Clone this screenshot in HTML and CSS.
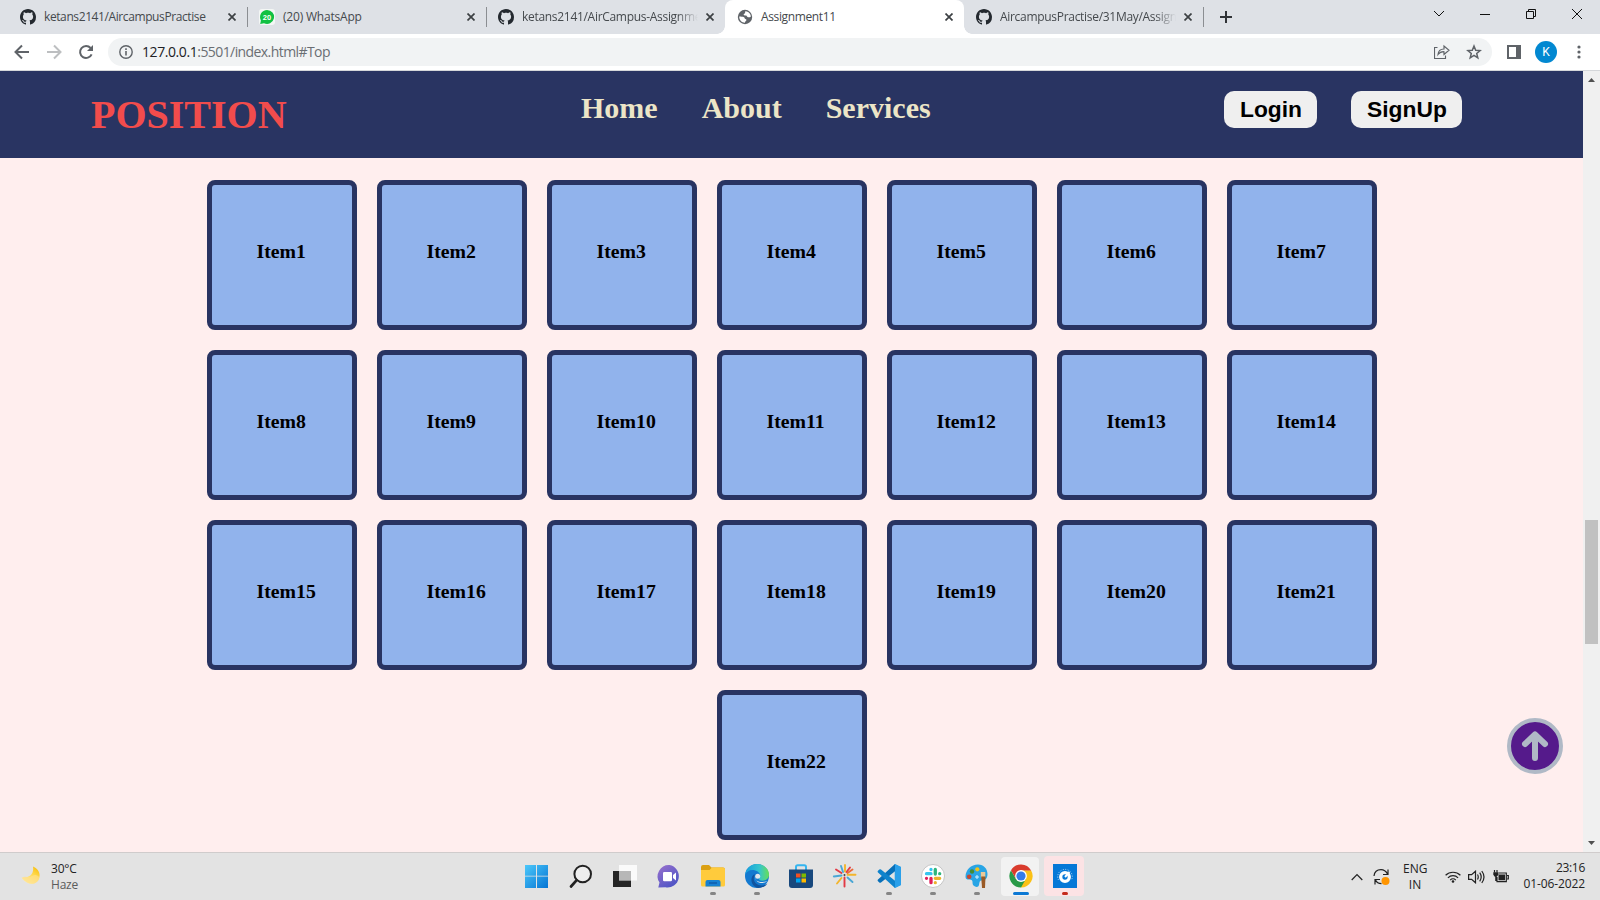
FILE: index.html
```html
<!DOCTYPE html>
<html lang="en">
<head>
<meta charset="utf-8">
<title>Assignment11</title>
<link rel="stylesheet" href="styles.css">
</head>
<body>
<svg class="defs" width="0" height="0">
  <symbol id="github" viewBox="0 0 16 16"><path fill="#24292f" d="M8 0C3.58 0 0 3.58 0 8c0 3.54 2.29 6.53 5.47 7.59.4.07.55-.17.55-.38 0-.19-.01-.82-.01-1.49-2.01.37-2.53-.49-2.69-.94-.09-.23-.48-.94-.82-1.13-.28-.15-.68-.52-.01-.53.63-.01 1.08.58 1.23.82.72 1.21 1.87.87 2.33.66.07-.52.28-.87.51-1.07-1.78-.2-3.64-.89-3.64-3.95 0-.87.31-1.59.82-2.15-.08-.2-.36-1.02.08-2.12 0 0 .67-.21 2.2.82.64-.18 1.32-.27 2-.27s1.36.09 2 .27c1.53-1.04 2.2-.82 2.2-.82.44 1.1.16 1.92.08 2.12.51.56.82 1.27.82 2.15 0 3.07-1.87 3.75-3.65 3.95.29.25.54.73.54 1.48 0 1.07-.01 1.93-.01 2.2 0 .21.15.46.55.38A8.01 8.01 0 0 0 16 8c0-4.42-3.58-8-8-8z"/></symbol>
  <symbol id="close" viewBox="0 0 8 8"><path d="M.5.5l7 7M7.5.5l-7 7" stroke="#3c4043" stroke-width="1.7"/></symbol>
</svg>

<div class="tabstrip">
  <div class="tab">
    <svg class="fav"><use href="#github"/></svg>
    <span class="title t1">ketans2141/AircampusPractise</span>
    <svg class="close"><use href="#close"/></svg>
  </div>
  <div class="tab sep">
    <svg class="fav" viewBox="0 0 16 16"><rect width="16" height="16" rx="3" fill="#f4f7f5"/><path d="M8 1a7 7 0 1 1-3 13.3L1.2 15l.7-3.600A7 7 0 0 1 8 1z" fill="#12c143"/><text x="8" y="10.700" class="badge">20</text></svg>
    <span class="title t2">(20) WhatsApp</span>
    <svg class="close"><use href="#close"/></svg>
  </div>
  <div class="tab sep">
    <svg class="fav"><use href="#github"/></svg>
    <span class="title fade t3">ketans2141/AirCampus-Assignme</span>
    <svg class="close"><use href="#close"/></svg>
  </div>
  <div class="tab active">
    <svg class="fav" viewBox="0 0 16 16"><circle cx="8" cy="8" r="7.200" fill="#5f6368"/><path d="M8.300 2.200c2.300 0 4.500 1.500 5.300 3.800l.2 1.700c-1 .6-2.200.8-3.300.3-.7-.4-.5-1.300-1.400-1.500-1-.1-1.800.1-2.300-.6-.4-.8.2-1.300.9-1.500.7-.3.2-1.100.6-2.200zM2.200 7.600c1.600.2 3.500-.1 4.900.7.700.6.400 1.500 1.300 1.700.8.200 1.200.5 1 1.300-.3.800-1.300.8-1.500 2.500-3.100 0-5.700-2.700-5.700-6.200z" fill="#fff"/></svg>
    <span class="title t4">Assignment11</span>
    <svg class="close"><use href="#close"/></svg>
  </div>
  <div class="tab">
    <svg class="fav"><use href="#github"/></svg>
    <span class="title fade t5">AircampusPractise/31May/Assign</span>
    <svg class="close"><use href="#close"/></svg>
  </div>
  <div class="newtab"><svg width="12" height="12"><path d="M6 0v12M0 6h12" stroke="#303337" stroke-width="2"/></svg></div>
  <div class="winctl">
    <svg viewBox="0 0 12 12"><path d="M1 3l5 5 5-5" /></svg>
    <svg viewBox="0 0 12 12"><path d="M1 6.500h10" /></svg>
    <svg viewBox="0 0 12 12"><path d="M1.500 3.500h7v7h-7zM3.500 3.500v-2h7v7h-2" /></svg>
    <svg viewBox="0 0 12 12"><path d="M1 1l10 10M11 1L1 11" /></svg>
  </div>
</div>

<div class="toolbar">
  <svg class="nav" viewBox="0 0 16 16"><path d="M15 8H2M8 1.500L1.500 8 8 14.500" stroke="#5f6368"/></svg>
  <svg class="nav" viewBox="0 0 16 16"><path d="M1 8h13M8 1.500L14.500 8 8 14.500" stroke="#bdbfc1"/></svg>
  <svg class="nav" viewBox="0 0 16 16"><path d="M13.600 10.300A6 6 0 1 1 12.600 4" stroke="#5f6368"/><path d="M15 1v6H9z" fill="#5f6368"/></svg>
  <div class="omnibox">
    <svg class="info" viewBox="0 0 14 14"><circle cx="7" cy="7" r="6.200" fill="none" stroke="#5f6368" stroke-width="1.400"/><path d="M7 6v4.500M7 3.300v1.600" stroke="#5f6368" stroke-width="1.600"/></svg>
    <span class="url"><b>127.0.0.1</b>:5501/index.html#Top</span>
    <svg class="share" viewBox="0 0 16 16"><path d="M3.500 3.500h-3v11h11v-3M4 10.500C4.300 7 6.500 5 10 5V2l5 4.300-5 4.200V7.700C7.300 7.600 5.500 8.500 4 10.500z" fill="none" stroke="#5f6368" stroke-width="1.150"/></svg>
    <svg class="star" viewBox="0 0 16 16"><path d="M8 2l1.700 4.200 4.400.3-3.400 2.900 1.100 4.400L8 11.400l-3.800 2.400 1.100-4.400L1.900 6.500l4.400-.3z" fill="none" stroke="#5f6368" stroke-width="1.500"/></svg>
  </div>
  <svg class="panel" viewBox="0 0 14 14"><path d="M1 1h12v12H1z" fill="none" stroke="#5f6368" stroke-width="2"/><path d="M9 1h4v12H9z" fill="#5f6368"/></svg>
  <span class="avatar">K</span>
  <svg class="dots" viewBox="0 0 4 14"><g fill="#5f6368"><circle cx="2" cy="2" r="1.600"/><circle cx="2" cy="7" r="1.600"/><circle cx="2" cy="12" r="1.600"/></g></svg>
</div>

<div class="viewport">
  <div class="page">
    <header class="header">
      <h1 class="logo">POSITION</h1>
      <nav class="links"><a>Home</a><a>About</a><a>Services</a></nav>
      <div class="buttons"><button>Login</button><button>SignUp</button></div>
    </header>
    <main class="items">
      <div class="item">Item1</div><div class="item">Item2</div><div class="item">Item3</div><div class="item">Item4</div><div class="item">Item5</div><div class="item">Item6</div><div class="item">Item7</div>
      <div class="item">Item8</div><div class="item">Item9</div><div class="item">Item10</div><div class="item">Item11</div><div class="item">Item12</div><div class="item">Item13</div><div class="item">Item14</div>
      <div class="item">Item15</div><div class="item">Item16</div><div class="item">Item17</div><div class="item">Item18</div><div class="item">Item19</div><div class="item">Item20</div><div class="item">Item21</div>
      <div class="item">Item22</div>
    </main>
    <svg class="totop" viewBox="0 0 56 56"><circle cx="28" cy="28" r="26" fill="#551a8b" stroke="#b0b9c6" stroke-width="4"/><path d="M28 40V18M18 26l10-9.500L38 26" fill="none" stroke="#b0b9c6" stroke-width="6" stroke-linecap="round" stroke-linejoin="round"/></svg>
  </div>
  <div class="scrollbar">
    <svg width="7" height="4"><path d="M0 4L3.500 0 7 4z" fill="#505050"/></svg>
    <i class="thumb"></i>
    <svg width="7" height="4"><path d="M0 0h7L3.500 4z" fill="#505050"/></svg>
  </div>
</div>

<footer class="taskbar">
  <div class="weather">
    <svg width="20" height="20" viewBox="0 0 20 20"><defs><linearGradient id="mn" x1="1" y1="0" x2=".3" y2="1"><stop offset="0" stop-color="#f5b800"/><stop offset=".45" stop-color="#ffd84a"/><stop offset="1" stop-color="#fff0b5"/></linearGradient></defs><path d="M12 .5c5 1.800 8 7 6 12-2 6-11 8.500-17.500-1C7 12.500 13.500 9 12 .5z" fill="url(#mn)"/><path d="M1 12c4-3 7 1 10-2 3-2 6-1 7.500 1.500-1.500 7-10 9.500-17.500.5z" fill="#ffe08a" opacity=".7"/></svg>
    <div class="two left"><span class="deg">30°C</span><span class="haze">Haze</span></div>
  </div>
  <div class="apps">
    <div class="app win"><svg viewBox="0 0 24 24"><defs><linearGradient id="wn" x1="0" y1="0" x2="1" y2="1"><stop offset="0" stop-color="#4cc8fa"/><stop offset="1" stop-color="#0474d4"/></linearGradient></defs><path d="M0 1h11v10.700H0zM12 1h11v10.700H12zM0 12.500h11V24H0zM12 12.500h11V24H12z" fill="url(#wn)"/></svg></div>
    <div class="app"><svg viewBox="0 0 24 24"><circle cx="13.700" cy="10" r="8.300" fill="#eee" stroke="#222" stroke-width="2"/><path d="M7.700 16.200L2 22.500" stroke="#222" stroke-width="2.700" stroke-linecap="round"/></svg></div>
    <div class="app"><svg viewBox="0 0 24 24"><path d="M0 7h18v16H0z" fill="#252525"/><path d="M6 1h18v15.500H6z" fill="#fff" opacity=".82"/><path d="M6 7h12v9.500H6z" fill="#aaa" opacity=".7"/></svg></div>
    <div class="app"><svg viewBox="-1 0 24 24"><defs><linearGradient id="ch" x1="0" y1="0" x2=".7" y2="1"><stop offset="0" stop-color="#9a71cd"/><stop offset="1" stop-color="#4d54c5"/></linearGradient></defs><path d="M11.500 1a11.300 11.300 0 1 1-4 22.300L.3 23.500l1.200-5A11.300 11.300 0 0 1 11.500 1z" fill="url(#ch)"/><rect x="5" y="8" width="9" height="9.300" rx="1.200" fill="#fff"/><path d="M15 11l3-2.500v8L15 14z" fill="#fff"/></svg></div>
    <div class="app run"><svg viewBox="0 0 24 24"><path d="M0 3q0-2 2-2h6l2.500 2.500H22q2 0 2 2V10H0z" fill="#dba013"/><path d="M0 6h8.500L11 3.500h11q2 0 2 2V21q0 1.500-1.500 1.500h-21Q0 22.500 0 21z" fill="#ffcb3c"/><path d="M4.500 22.500V18q0-2 2-2h11q2 0 2 2v4.500z" fill="#1681d2"/><path d="M8 19h8" stroke="#0f5cab" stroke-width="1.500"/></svg></div>
    <div class="app run"><svg viewBox="0 0 24 24"><defs><linearGradient id="ed" x1="0" x2="1"><stop offset="0" stop-color="#159dde"/><stop offset=".6" stop-color="#35c5cd"/><stop offset="1" stop-color="#68df55"/></linearGradient></defs><circle cx="12" cy="12" r="12" fill="#1379d0"/><path d="M0 11C1 4 6 0 12 0c7 0 12 5 12 10.500 0 4-3 6.200-6.500 6.200-3 0-4.200-1.200-3-2.700C17 9.500 12 6 7.500 6 4 6 1 8 0 11z" fill="url(#ed)"/><path d="M9.500 12c-2.500 5 2 9.500 7 9.500 2.500 0 4.500-1 6-2-1 2-5 4.500-9 4.500C7 23.500 3.500 14 9.500 10z" fill="#10539e"/><path d="M10.500 10.500c-2.500 5 3 9.500 11.800 6.800-3.500 2.500-8.300 2.200-10.500-.3-1.700-2-2.300-4.500-1.300-6.500z" fill="#e1e6ea"/><circle cx="12.700" cy="12.300" r="2.500" fill="#e1e6ea"/></svg></div>
    <div class="app"><svg viewBox="0 0 24 24"><path d="M7 6V3q0-1.700 1.700-1.700h6.600Q17 1.300 17 3v3" fill="none" stroke="#36b5ef" stroke-width="2"/><path d="M0 5.500h24V21q0 3-3 3H3q-3 0-3-3z" fill="#18487d"/><path d="M7 9.500h4.500v4H7z" fill="#f25022"/><path d="M12.500 9.500H17v4h-4.500z" fill="#7fba00"/><path d="M7 14.500h4.500v4H7z" fill="#00a4ef"/><path d="M12.500 14.500H17v4h-4.500z" fill="#ffb900"/></svg></div>
    <div class="app"><svg viewBox="0 0 24 24"><g stroke-width="1.900" stroke-linecap="round"><path d="M11.500 13.500v9M13.500 8L17 3.500M8.500 9L3 5.500" stroke="#e23a45"/><path d="M10 8L8 2M8.500 11.500L.8 12.500M14.500 13.500l5 4.500" stroke="#4ba7d5"/><path d="M12 7.500V1M14.500 10.800h8M8.500 14L4 19.500" stroke="#f3b52d"/><path d="M14.500 9l5-3.500" stroke="#ef6a38"/></g><circle cx="11.500" cy="11" r="1" fill="#444"/></svg></div>
    <div class="app run"><svg viewBox="0 0 24 24"><path d="M17.700 0L24 3v18l-6.300 3V0z" fill="#30a7ee"/><path d="M18 0L1 15.500q-1 .8 0 1.700l1.300 1.200q.8.600 1.700 0L18 7.300z" fill="#0870b9"/><path d="M18 24L1 8.500q-1-.8 0-1.700l1.300-1.200q.8-.6 1.700 0L18 16.700z" fill="#0f83cc"/><path d="M18 0l6 3v18l-6 3z" fill="#2aa0ea"/></svg></div>
    <div class="app run"><svg viewBox="0 0 24 24"><circle cx="12" cy="12" r="11.500" fill="#fff" stroke="#b9b9b9" stroke-width=".8"/><g stroke-width="3.300" stroke-linecap="round"><path d="M10 5.500v.01M5.500 9.700H10" stroke="#36c5f0"/><path d="M14.300 5.500V10M18.700 9.700v.01" stroke="#2eb67d"/><path d="M14.300 14.300h4.400M14.300 18.700v.01" stroke="#ecb22e"/><path d="M10 14.300v4.400M5.500 14.300v.01" stroke="#e01e5a"/></g></svg></div>
    <div class="app run"><svg viewBox="0 0 24 24"><path d="M13 .5c6 0 9.500 4.500 9.500 9.500 0 6-4 6.500-6 6.500s-2 2-2.500 4.500c-.5 2.500-3.500 2.500-5.500.5-1.700-2-.2-4.500-2-5.500S.5 17 .5 12.500C.5 6 6 .5 13 .5z" fill="#29a5e5"/><circle cx="4.200" cy="12.700" r="2.300" fill="#c6462f"/><circle cx="7" cy="7.500" r="2.200" fill="#438b35"/><circle cx="12.300" cy="5.300" r="2.100" fill="#f2c318"/><path d="M12 11v4M10 13h4" stroke="#d7f2ff"/><path d="M15.800 8h4.500v5.500h-4.500z" fill="#e9c99a"/><path d="M16.200 12.500h4.300L20 24h-3z" fill="#9a5a26"/></svg></div>
    <div class="app run current"><svg viewBox="0 0 24 24"><path d="M22 6.200A11.500 11.500 0 0 1 12 23.500L12 12V6.200z" fill="#fbc116"/><path d="M2 6.200A11.500 11.500 0 0 0 12 23.500l5-8.700L12 12 7 14.900z" fill="#299a48"/><path d="M2 6.200l5 8.700L12 6.500h10.100A11.500 11.500 0 0 0 2 6.200z" fill="#d93b2d"/><circle cx="12" cy="12" r="5.900" fill="#fff"/><circle cx="12" cy="12" r="4.600" fill="#347be8"/></svg></div>
    <div class="app run alert"><svg viewBox="0 0 24 24"><path d="M0 0h24v24H0z" fill="#0678d7"/><circle cx="12" cy="13" r="4.300" fill="none" stroke="#fff" stroke-width="3.300"/><path d="M12 13l4.500-5" stroke="#fff" stroke-width="2"/><path d="M5.500 16a7.300 7.300 0 1 1 13 0" fill="none" stroke="#fff" stroke-width="1" stroke-dasharray="1 1.500" opacity=".7"/></svg></div>
  </div>
  <div class="tray">
    <svg class="up" viewBox="0 0 12 8"><path d="M.7 7L6 1.500 11.300 7" /></svg>
    <svg class="sync" viewBox="0 0 17 18"><path d="M1 8C1.500 3.500 4 1.700 8 1.700c3 0 5 1.500 6.500 4.300M15 1.500v5h-5M7 11.500H2v5M2.500 12c1 2.200 3 3.500 6 3.700" /><circle cx="12.500" cy="13" r="4" class="orange"/></svg>
    <div class="two lang"><span class="eng">ENG</span><span class="in">IN</span></div>
    <svg class="wifi" viewBox="0 0 16 12"><path d="M.6 4.300a10.500 10.500 0 0 1 14.800 0M2.900 6.800a7.200 7.200 0 0 1 10.200 0M5.200 9.100a4 4 0 0 1 5.600 0"/><circle cx="8" cy="10.500" r="1.300" class="dark"/></svg>
    <svg class="vol" viewBox="0 0 17 14"><path d="M.6 4.700h3L7.500 1.200v11.600L3.600 9.300h-3zM9.500 4.500q1.500 2.500 0 5M11.700 2.700q3 4.300 0 8.600M13.800 1q4.400 6 0 12"/></svg>
    <svg class="bat" viewBox="0 0 16 13"><path d="M5.500 3h7.800v8.700H4V7M14 5.500h1.300v3.500H14M1.500 0v2.500M4 0v2.500M2.800 6v5"/><path d="M5.500 4.500H12v5.700H5.500zM.3 2.200h5v2.500l-1.500 2h-2l-1.500-2z" class="dark"/></svg>
    <div class="two clock"><span class="time">23:16</span><span class="date">01-06-2022</span></div>
  </div>
</footer>
</body>
</html>
```

FILE: styles.css
```css
* { box-sizing: border-box; }
body { margin: 0; width: 1600px; height: 900px; overflow: hidden; display: flex; flex-direction: column; font-family: "Open Sans", "Noto Sans", sans-serif; }
svg { display: block; flex: none; }
.defs { position: absolute; }

.tabstrip { height: 34px; flex: none; background: #dee1e6; display: flex; padding-left: 8px; }
.tab { width: 239px; height: 34px; display: flex; align-items: center; padding: 0 11px 0 12px; position: relative; flex: none; }
.sep::before, .newtab::before { content: ""; position: absolute; left: 0; top: 7px; width: 1px; height: 20px; background: #8b8e92; }
.active { background: #fff; border-radius: 8px 8px 0 0; }
.active::before, .active::after { content: ""; position: absolute; bottom: 0; width: 8px; height: 8px; }
.active::before { left: -8px; background: radial-gradient(circle at 0 0, transparent 7.5px, #fff 8px); }
.active::after { right: -8px; background: radial-gradient(circle at 100% 0, transparent 7.5px, #fff 8px); }
.fav { width: 16px; height: 16px; margin-right: 8px; }
.badge { font: bold 7.5px "Liberation Sans", sans-serif; fill: #fff; text-anchor: middle; }
.title { width: 176px; font-size: 12px; line-height: 16px; color: #45494d; white-space: nowrap; }
.fade { -webkit-mask-image: linear-gradient(90deg, #000 155px, transparent 176px); mask-image: linear-gradient(90deg, #000 155px, transparent 176px); }
.close { width: 8px; height: 8px; margin-left: 8px; }
.newtab { width: 46px; position: relative; display: flex; align-items: center; padding-left: 17px; }
.winctl { display: flex; gap: 34px; margin-left: auto; padding: 8px 17px 0 0; }
.winctl svg { width: 12px; height: 12px; fill: none; stroke: #111; stroke-width: 1; }
.t1 { letter-spacing: -.4px; }
.t2 { letter-spacing: -.2px; }
.t3, .t5 { letter-spacing: -.3px; }
.t4 { letter-spacing: -.37px; }

.toolbar { height: 37px; flex: none; background: #fff; border-bottom: 1px solid #d5d7da; display: flex; align-items: center; padding: 0 19px 0 14px; }
.nav { width: 16px; height: 16px; margin-right: 16px; fill: none; stroke-width: 2; }
.omnibox { width: 1384px; height: 28px; border-radius: 14px; background: #f1f3f4; display: flex; align-items: center; padding: 0 10px 0 11px; margin-left: -2px; }
.info { width: 14px; height: 14px; margin-right: 9px; }
.url { font-size: 14px; line-height: 20px; color: #6a6e73; letter-spacing: -.58px; }
.url b { font-weight: 400; color: #202124; letter-spacing: -.42px; }
.share { width: 16px; height: 16px; margin-left: auto; margin-right: 16px; }
.star { width: 16px; height: 16px; }
.panel { width: 14px; height: 14px; margin-left: 15px; }
.avatar { width: 22px; height: 22px; border-radius: 50%; background: #0288d1; color: #fff; font: 12px/22px Roboto, sans-serif; text-align: center; margin-left: 14px; }
.dots { width: 4px; height: 14px; margin-left: auto; }

.viewport { height: 781px; flex: none; display: flex; }
.page { width: 1583px; background: #ffeeee; position: relative; }
.header { height: 87px; background: #293462; display: flex; font-family: "Liberation Serif", serif; font-weight: bold; padding-left: 91px; }
.logo { margin: 21px 0 0; width: 490px; font-size: 40px; line-height: 46px; color: #f24c4c; }
.links { display: flex; gap: 44px; width: 643px; padding-top: 20px; font-size: 30px; line-height: 34px; color: #ece5c7; }
.buttons { display: flex; gap: 34px; padding-top: 20px; }
.buttons button { height: 37px; border: 0; border-radius: 10px; background: #efefef; padding: 0 15px 0 16px; font: bold 22.8px "Liberation Sans", sans-serif; color: #000; }
.items { display: flex; flex-wrap: wrap; justify-content: center; gap: 20px; padding: 22px 200px 0; }
.item { width: 150px; height: 150px; border: 5px solid #293462; border-radius: 8px; background: #91b3ec; padding: 55px 0 0 45px; font: bold 19.8px/23px "Liberation Serif", serif; color: #000; }
.totop { position: absolute; left: 1507px; top: 647px; width: 56px; height: 56px; }
.scrollbar { width: 17px; background: #f0f0f0; display: flex; flex-direction: column; align-items: center; padding: 7px 0; }
.thumb { width: 13px; height: 124px; background: #c1c1c1; margin: 438px 0 auto; }

.taskbar { height: 48px; flex: none; background: #e3e3e3; border-top: 1px solid #d0cccc; display: flex; color: #222; font-size: 12px; }
.weather { width: 515px; display: flex; gap: 10px; padding: 13px 0 0 21px; }
.two { display: flex; flex-direction: column; line-height: 16px; text-align: right; }
.weather .two { margin-top: -5px; text-align: left; }
.deg, .haze { letter-spacing: -.2px; }
.haze { color: #5c5c5c; }
.apps { display: flex; width: 572px; }
.app { width: 44px; height: 47px; display: flex; justify-content: center; position: relative; padding-top: 11px; flex: none; }
.app svg { width: 24px; height: 24px; position: relative; overflow: visible; }
.run::after { content: ""; position: absolute; left: 19px; top: 39px; width: 6px; height: 3px; border-radius: 2px; background: #858585; }
.current::before, .alert::before { content: ""; position: absolute; left: 2px; top: 4px; width: 38px; height: 39px; border-radius: 4px; background: #f2f2f2; }
.alert::before { left: 1px; top: 3px; width: 40px; height: 40px; background: #fce3e5; }
.current::after { left: 14px; width: 16px; background: #0c78d4; }
.alert::after { background: #c42b1c; }
.tray { display: flex; align-items: center; padding: 0 15px 0 264px; flex: 1; }
.tray svg { fill: none; stroke: #222; stroke-width: 1.2; }
.tray svg .dark { fill: #222; stroke: none; }
.tray svg .orange { fill: #ff9500; stroke: none; }
.up { width: 12px; height: 8px; margin-right: 10px; }
.sync { width: 17px; height: 18px; margin-right: 13px; }
.lang { width: 24px; text-align: center; margin-right: 18px; }
.wifi { width: 16px; height: 12px; margin-right: 7px; }
.vol { width: 17px; height: 14px; margin-right: 8px; }
.bat { width: 16px; height: 13px; }
.clock { margin: -1px 0 0 auto; white-space: nowrap; }
.date { letter-spacing: -.1px; }
.time { letter-spacing: -.3px; }
```
